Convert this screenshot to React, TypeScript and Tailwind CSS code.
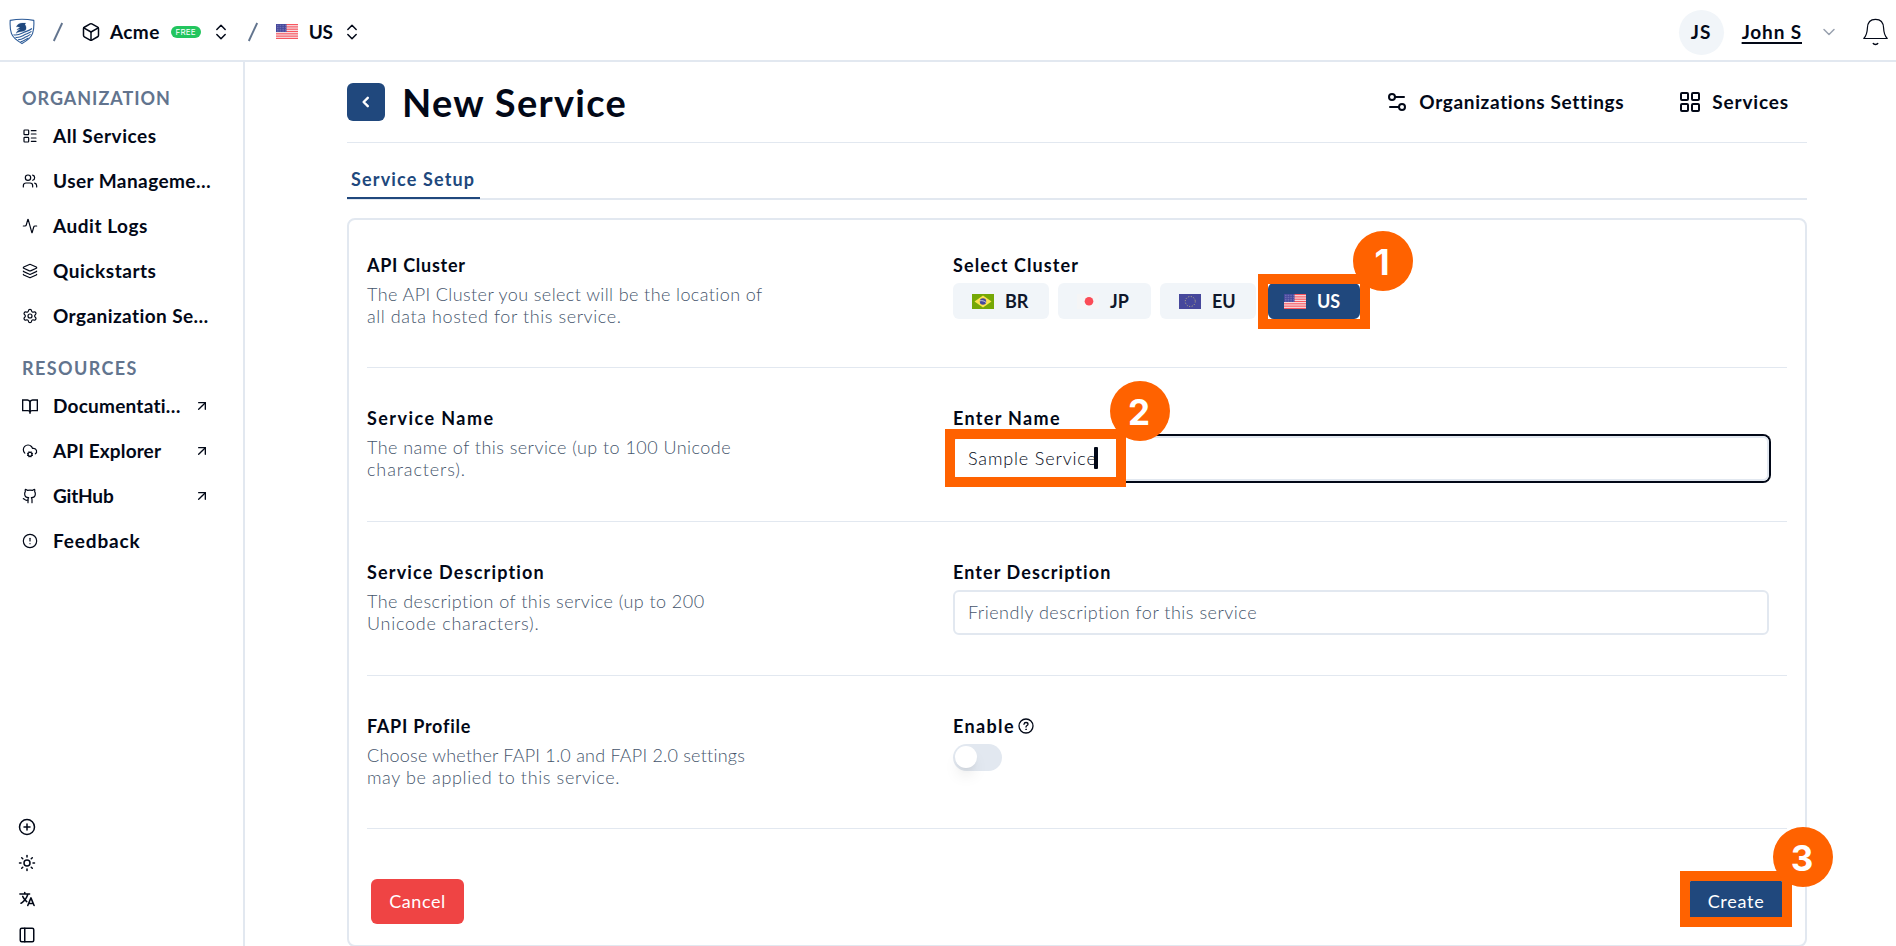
import React, { useState } from 'react';
import {
    Activity,
    ArrowUpRight,
    Box,
    ChevronDown,
    ChevronsUpDown,
    CircleAlert,
    CirclePlus,
    CloudCog,
    Github,
    Layers,
    LayoutGrid,
    LayoutList,
    PanelLeft,
    Settings,
    Settings2,
    Sun,
    Users,
} from 'lucide-react';
import { IoLanguage } from 'react-icons/io5';
import clsx from 'clsx';

type IconType = React.ComponentType<{ className?: string; strokeWidth?: number }>;

interface NavItem {
    label: string;
    icon: IconType;
    tracking: string;
    external?: boolean;
}

const BookIcon: IconType = ({ className }) => (
    <svg className={className} viewBox="0 0 24 24" fill="none" stroke="currentColor" strokeWidth="2">
        <path d="M1 3h7a4 4 0 0 1 4 3v15a4 4 0 0 0-3-2H1z" />
        <path d="M23 3h-7a4 4 0 0 0-4 3v15a4 4 0 0 1 3-2h8z" />
    </svg>
);

const HelpIcon: React.FC = () => (
    <svg className="size-4" viewBox="0 0 16 16" fill="none" stroke="currentColor" strokeWidth="1.3" strokeLinecap="round">
        <circle cx="8" cy="8" r="7" />
        <path d="M6 6.3c.1-1.1.9-1.8 2-1.8s2 .7 2 1.7c0 1.3-2 1.5-2 2.8" />
        <circle cx="8" cy="11.3" r=".4" fill="currentColor" strokeWidth=".8" />
    </svg>
);

const BellIcon: React.FC = () => (
    <svg className="h-7 w-[25px]" viewBox="0 0 25 28" fill="none" stroke="currentColor" strokeWidth="1.2">
        <path d="M.8 20.5C3.4 17.6 4.2 15.6 4.4 10 4.6 4.2 7.4 1.3 12.5 1.3S20.4 4.2 20.6 10c.2 5.6 1 7.6 3.6 10.5z" strokeLinejoin="round" />
        <path d="M10 25c1 1.9 4 1.9 5 0" strokeWidth="1.6" />
    </svg>
);

const Logo: React.FC = () => (
    <svg className="h-[27px] w-[26px]" viewBox="0 0 26 27" fill="none" stroke="#2b5a97">
        <path d="M1.2 2.4C8.500 1 17.500 1 24.800 2.400c.3 5 .2 9-1.200 13C22 20 17.500 23 13 25.500 8.500 23 4 20 2.400 15.400 1 11.400.9 7.400 1.200 2.400z" strokeWidth="1.1" />
        <path
            d="M7.200 9c1-2.700 3.300-3.900 6-3.900h3.600l-.9 1.300c1.400 1.500 1.600 3.800.8 5.700-1 .9-2.300 1.300-3.600 1.400-2 .3-4.200.6-6.100 1.900.8-2 2.400-3.400 4.400-4.100-1.400-.1-2.500.1-3.600.6.8-1.300 2-2 3.300-2.200C10 8.700 8.400 8.500 7.200 9z"
            fill="#20487d"
            strokeWidth=".2"
        />
        <path
            d="M4.500 16.800c4 .9 6.200-.4 9.500-2.100 2.800-1.300 5.800-1.600 9-4.200M6.500 19.400c4 .5 6-1 9-2.600 2.400-1.200 4.700-1.700 7-3.400M9 21.700c3.200.2 5-1.200 7.500-2.600 1.800-1 3.400-1.500 5-2.700M11.500 23.800c2.500-.2 4.500-2 8-3.700"
            strokeWidth="1.100"
        />
    </svg>
);

const Slash: React.FC = () => (
    <svg className="h-5 w-3 text-slate-500" viewBox="0 0 12 20" stroke="currentColor" strokeWidth="1.9">
        <path d="M10.200 1 1.800 19" />
    </svg>
);

const FlagUS: React.FC = () => (
    <svg className="h-[15px] w-[22px] shrink-0" viewBox="0 0 22 15">
        <rect width="22" height="15" fill="#f6e6e9" />
        {[0, 2.31, 4.62, 6.93, 9.24, 11.55, 13.86].map((y) => (
            <rect key={y} y={y} width="22" height="1.15" fill="#f8565f" />
        ))}
        <rect width="10.5" height="8" fill="#46489c" />
        {[1.3, 3.3, 5.3, 7].map((y) => (
            <path key={y} d={`M1 ${y}h9`} stroke="#b9b9de" strokeWidth=".6" strokeDasharray=".7 .9" />
        ))}
    </svg>
);

const FlagBR: React.FC = () => (
    <svg className="h-[15px] w-[22px] shrink-0" viewBox="0 0 22 15">
        <rect width="22" height="15" fill="#75a806" />
        <path d="M11 1.6 19.5 7.5 11 13.4 2.5 7.5z" fill="#fbe34f" />
        <circle cx="11" cy="7.5" r="3.2" fill="#46489c" />
        <path d="M8 6.8c2-.5 4.5.2 6 1.7" stroke="#e7e9ef" strokeWidth=".8" fill="none" />
    </svg>
);

const FlagJP: React.FC = () => (
    <svg className="h-[15px] w-[22px] shrink-0" viewBox="0 0 22 15">
        <rect width="22" height="15" fill="#f5f5f6" />
        <circle cx="12" cy="7.2" r="4.3" fill="#fb4b56" />
    </svg>
);

const FlagEU: React.FC = () => (
    <svg className="h-[15px] w-[22px] shrink-0" viewBox="0 0 22 15">
        <rect width="22" height="15" fill="#46489c" />
        <circle cx="11.3" cy="7.5" r="5" fill="none" stroke="#d8cd7c" strokeWidth=".9" strokeDasharray=".9 1.718" />
    </svg>
);

const organizationNav: NavItem[] = [
    { label: 'All Services', icon: LayoutList, tracking: 'tracking-[0.028em]' },
    { label: 'User Manageme…', icon: Users, tracking: 'tracking-[0.023em]' },
    { label: 'Audit Logs', icon: Activity, tracking: 'tracking-[0.028em]' },
    { label: 'Quickstarts', icon: Layers, tracking: 'tracking-[0.028em]' },
    { label: 'Organization Se…', icon: Settings, tracking: 'tracking-[0.022em]' },
];

const resourcesNav: NavItem[] = [
    { label: 'Documentati…', icon: BookIcon, tracking: 'tracking-[0.012em]', external: true },
    { label: 'API Explorer', icon: CloudCog, tracking: 'tracking-[0.007em]', external: true },
    { label: 'GitHub', icon: Github, tracking: 'tracking-[-0.01em]', external: true },
    { label: 'Feedback', icon: CircleAlert, tracking: 'tracking-[0.045em]' },
];

const clusters = [
    { id: 'BR', flag: FlagBR, size: 'w-24' },
    { id: 'JP', flag: FlagJP, size: 'w-[93px]' },
    { id: 'EU', flag: FlagEU, size: 'w-24' },
];

const NavLink: React.FC<{ item: NavItem }> = ({ item }) => {
    const Icon = item.icon;
    return (
        <a className="flex h-[45px] items-center">
            <Icon className="mr-[15px] size-4 shrink-0" strokeWidth={1.8} />
            <span className={clsx('flex-1 pt-0.5 text-[19px] font-bold whitespace-nowrap', item.tracking)}>{item.label}</span>
            {item.external && <ArrowUpRight className="mr-[33px] size-4" strokeWidth={2} />}
        </a>
    );
};

const Step: React.FC<{ n: number; className: string }> = ({ n, className }) => (
    <div
        className={clsx(
            'absolute flex size-[60px] items-center justify-center rounded-full bg-[#ff6200] pt-[3px] pr-0.5 font-[Inter,sans-serif] text-[35px] leading-none font-bold text-white',
            className,
        )}
    >
        {n}
    </div>
);

interface RowProps {
    title: string;
    titleTracking: string;
    lines: { text: string; tracking: string }[];
    className: string;
    children: React.ReactNode;
}

const Row: React.FC<RowProps> = ({ title, titleTracking, lines, className, children }) => (
    <div className={clsx('flex border-b border-slate-200', className)}>
        <div className="w-[586px]">
            <h3 className={clsx('text-lg leading-6 font-bold', titleTracking)}>{title}</h3>
            <p className="mt-1.5 text-lg leading-[22px] font-light text-slate-600">
                {lines.map((l) => (
                    <span key={l.text} className={clsx('block whitespace-nowrap', l.tracking)}>{l.text}</span>
                ))}
            </p>
        </div>
        <div className="w-[816px]">{children}</div>
    </div>
);

const App: React.FC = () => {
    const [name, setName] = useState('Sample Service');
    const [description, setDescription] = useState('');

    return (
        <div className="flex h-screen flex-col overflow-hidden bg-white font-[Lato,sans-serif] text-[#020817]">
            <header className="flex h-[62px] shrink-0 items-center border-b-2 border-slate-200 pt-1 pr-2 pl-[9px]">
                <div className="-mt-0.5">
                    <Logo />
                </div>
                <div className="ml-[17px] flex items-center">
                    <Slash />
                    <Box className="ml-[17px] size-5" strokeWidth={1.8} />
                    <span className="ml-[9px] text-[19px] font-bold tracking-[0.02em]">Acme</span>
                    <span className="ml-[11px] flex h-3 w-[30px] items-center justify-center rounded-full bg-[#22c55e] font-[Inter,sans-serif] text-[8px] leading-none tracking-[0.02em] text-white">
                        FREE
                    </span>
                    <ChevronsUpDown className="ml-2.5 size-5" strokeWidth={1.8} />
                </div>
                <div className="ml-4 flex items-center">
                    <Slash />
                    <span className="ml-[17px] -mt-0.5"><FlagUS /></span>
                    <span className="ml-[11px] text-[19px] font-bold tracking-[-0.02em]">US</span>
                    <ChevronsUpDown className="ml-2.5 size-5" strokeWidth={1.8} />
                </div>
                <div className="ml-auto flex items-center">
                    <div className="flex size-[45px] items-center justify-center rounded-full bg-slate-100 text-[19px] font-bold tracking-[0.06em]">
                        JS
                    </div>
                    <span className="ml-[18px] text-[19px] font-bold tracking-[0.045em] underline decoration-2 underline-offset-[3px]">
                        John S
                    </span>
                    <ChevronDown className="mr-6 ml-[17px] size-5 text-gray-400" strokeWidth={1.8} />
                    <BellIcon />
                </div>
            </header>

            <div className="flex min-h-0 flex-1">
                <aside className="flex w-[245px] shrink-0 flex-col border-r-2 border-slate-200 pt-6 pl-[22px]">
                    <h4 className="mb-[3px] text-lg leading-6 font-bold tracking-[0.054em] text-slate-500">ORGANIZATION</h4>
                    {organizationNav.map((item) => <NavLink key={item.label} item={item} />)}
                    <h4 className="mt-[18px] mb-[3px] text-lg leading-6 font-bold tracking-[0.078em] text-slate-500">RESOURCES</h4>
                    {resourcesNav.map((item) => <NavLink key={item.label} item={item} />)}
                    <div className="mt-[255px] -ml-1 flex flex-col gap-[18px]">
                        <CirclePlus className="size-[18px] shrink-0" />
                        <Sun className="size-[18px] shrink-0" />
                        <IoLanguage className="size-[18px] shrink-0" />
                        <PanelLeft className="size-[18px] shrink-0" />
                    </div>
                </aside>

                <main className="ml-[102px] w-[1460px] shrink-0">
                    <div className="flex h-[81px] items-center border-b border-slate-200 pr-[18px]">
                        <button className="flex size-[38px] items-center justify-center rounded-md bg-[#20487d] text-white">
                            <svg className="size-3" viewBox="0 0 12 12" fill="none" stroke="currentColor" strokeWidth="2.4" strokeLinecap="round" strokeLinejoin="round">
                                <path d="M7.800 1.800 3.600 6l4.200 4.200" />
                            </svg>
                        </button>
                        <h1 className="ml-[17px] text-[38px] leading-none font-bold tracking-[0.034em]">New Service</h1>
                        <a className="ml-auto flex items-center gap-2.5 text-[19px] font-bold tracking-[0.034em]">
                            <Settings2 className="size-6" />
                            Organizations Settings
                        </a>
                        <a className="ml-[54px] flex items-center gap-2.5 text-[19px] font-bold tracking-[0.045em]">
                            <LayoutGrid className="size-6" />
                            Services
                        </a>
                    </div>

                    <div className="flex h-[57px] border-b-2 border-slate-200">
                        <div className="h-14 w-[133px] border-b-2 border-[#20487d] pt-6 pl-1 text-lg leading-6 font-bold tracking-[0.064em] whitespace-nowrap text-[#20487d]">
                            Service Setup
                        </div>
                    </div>

                    <section className="mt-[18px] h-[729px] rounded-lg border-2 border-slate-200 px-[18px]">
                        <Row
                            title="API Cluster"
                            titleTracking="tracking-[0.04em]"
                            lines={[
                                { text: 'The API Cluster you select will be the location of', tracking: 'tracking-[0.022em]' },
                                { text: 'all data hosted for this service.', tracking: 'tracking-[0.032em]' },
                            ]}
                            className="h-[148px] pt-[33px]"
                        >
                            <label className="block text-lg leading-6 font-bold tracking-[0.061em]">Select Cluster</label>
                            <div className="mt-1.5 flex gap-[9px]">
                                {clusters.map(({ id, flag: Flag, size }) => (
                                    <button
                                        key={id}
                                        className={clsx('flex h-9 items-center rounded-md bg-slate-100 pl-[19px] text-lg font-bold text-slate-900', size)}
                                    >
                                        <Flag />
                                        <span className="ml-[11px]">{id}</span>
                                    </button>
                                ))}
                                <div className="relative ml-[3px]">
                                    <button className="flex h-9 w-[92px] items-center rounded-md bg-[#20487d] pl-4 text-lg font-bold text-white">
                                        <FlagUS />
                                        <span className="ml-[11px]">US</span>
                                    </button>
                                    <div className="absolute -top-[9px] -left-2.5 h-[55px] w-28 border-10 border-[#ff6200]" />
                                    <Step n={1} className="-top-[52px] left-[85px]" />
                                </div>
                            </div>
                        </Row>

                        <Row
                            title="Service Name"
                            titleTracking="tracking-[0.08em]"
                            lines={[
                                { text: 'The name of this service (up to 100 Unicode', tracking: 'tracking-[0.025em]' },
                                { text: 'characters).', tracking: 'tracking-[0.049em]' },
                            ]}
                            className="h-[154px] pt-[38px]"
                        >
                            <label className="block text-lg leading-6 font-bold tracking-[0.074em]">Enter Name</label>
                            <div className="relative mt-1.5">
                                <input
                                    value={name}
                                    onChange={(e) => setName(e.target.value)}
                                    className="block h-[45px] w-full rounded-md border-2 border-slate-200 px-[13px] pb-0.5 text-lg font-light tracking-[0.047em] ring-2 ring-[#020817] outline-none"
                                />
                                <div className="absolute top-[11px] left-[141px] h-[22px] w-1 rounded-[1px] bg-[#020817]" />
                                <div className="absolute -top-[7px] -left-2 h-[58px] w-[181px] border-10 border-[#ff6200]" />
                                <Step n={2} className="-top-[55px] left-[157px]" />
                            </div>
                        </Row>

                        <Row
                            title="Service Description"
                            titleTracking="tracking-[0.065em]"
                            lines={[
                                { text: 'The description of this service (up to 200', tracking: 'tracking-[0.025em]' },
                                { text: 'Unicode characters).', tracking: 'tracking-[0.041em]' },
                            ]}
                            className="h-[154px] pt-[38px]"
                        >
                            <label className="block text-lg leading-6 font-bold tracking-[0.06em]">Enter Description</label>
                            <input
                                value={description}
                                onChange={(e) => setDescription(e.target.value)}
                                placeholder="Friendly description for this service"
                                className="mt-1.5 block h-[45px] w-full rounded-md border-2 border-slate-200 px-[13px] pb-0.5 text-lg font-light tracking-[0.028em] outline-none placeholder:text-slate-600"
                            />
                        </Row>

                        <Row
                            title="FAPI Profile"
                            titleTracking="tracking-[0.041em]"
                            lines={[
                                { text: 'Choose whether FAPI 1.0 and FAPI 2.0 settings', tracking: 'tracking-[0.012em]' },
                                { text: 'may be applied to this service.', tracking: 'tracking-[0.035em]' },
                            ]}
                            className="h-[153px] pt-[38px]"
                        >
                            <label className="flex items-center gap-[3px] text-lg leading-6 font-bold tracking-[0.075em]">
                                Enable
                                <HelpIcon />
                            </label>
                            <div className="mt-1.5 flex h-[27px] w-[49px] items-center rounded-full bg-slate-200 pl-0.5">
                                <span className="mb-px size-[22px] rounded-full bg-white shadow-lg" />
                            </div>
                        </Row>

                        <div className="flex justify-between px-1 pt-[50px]">
                            <button className="h-[45px] w-[93px] rounded-md bg-[#ef4444] pb-0.5 text-lg tracking-[0.031em] text-white">Cancel</button>
                            <div className="relative">
                                <button className="h-[45px] w-[94px] rounded-md bg-[#20487d] pb-0.5 text-lg tracking-[0.04em] text-white">Create</button>
                                <div className="absolute -top-2 -left-[9px] h-14 w-28 border-10 border-[#ff6200]" />
                                <Step n={3} className="-top-[52px] left-[84px]" />
                            </div>
                        </div>
                    </section>
                </main>
            </div>
        </div>
    );
};

export default App;
